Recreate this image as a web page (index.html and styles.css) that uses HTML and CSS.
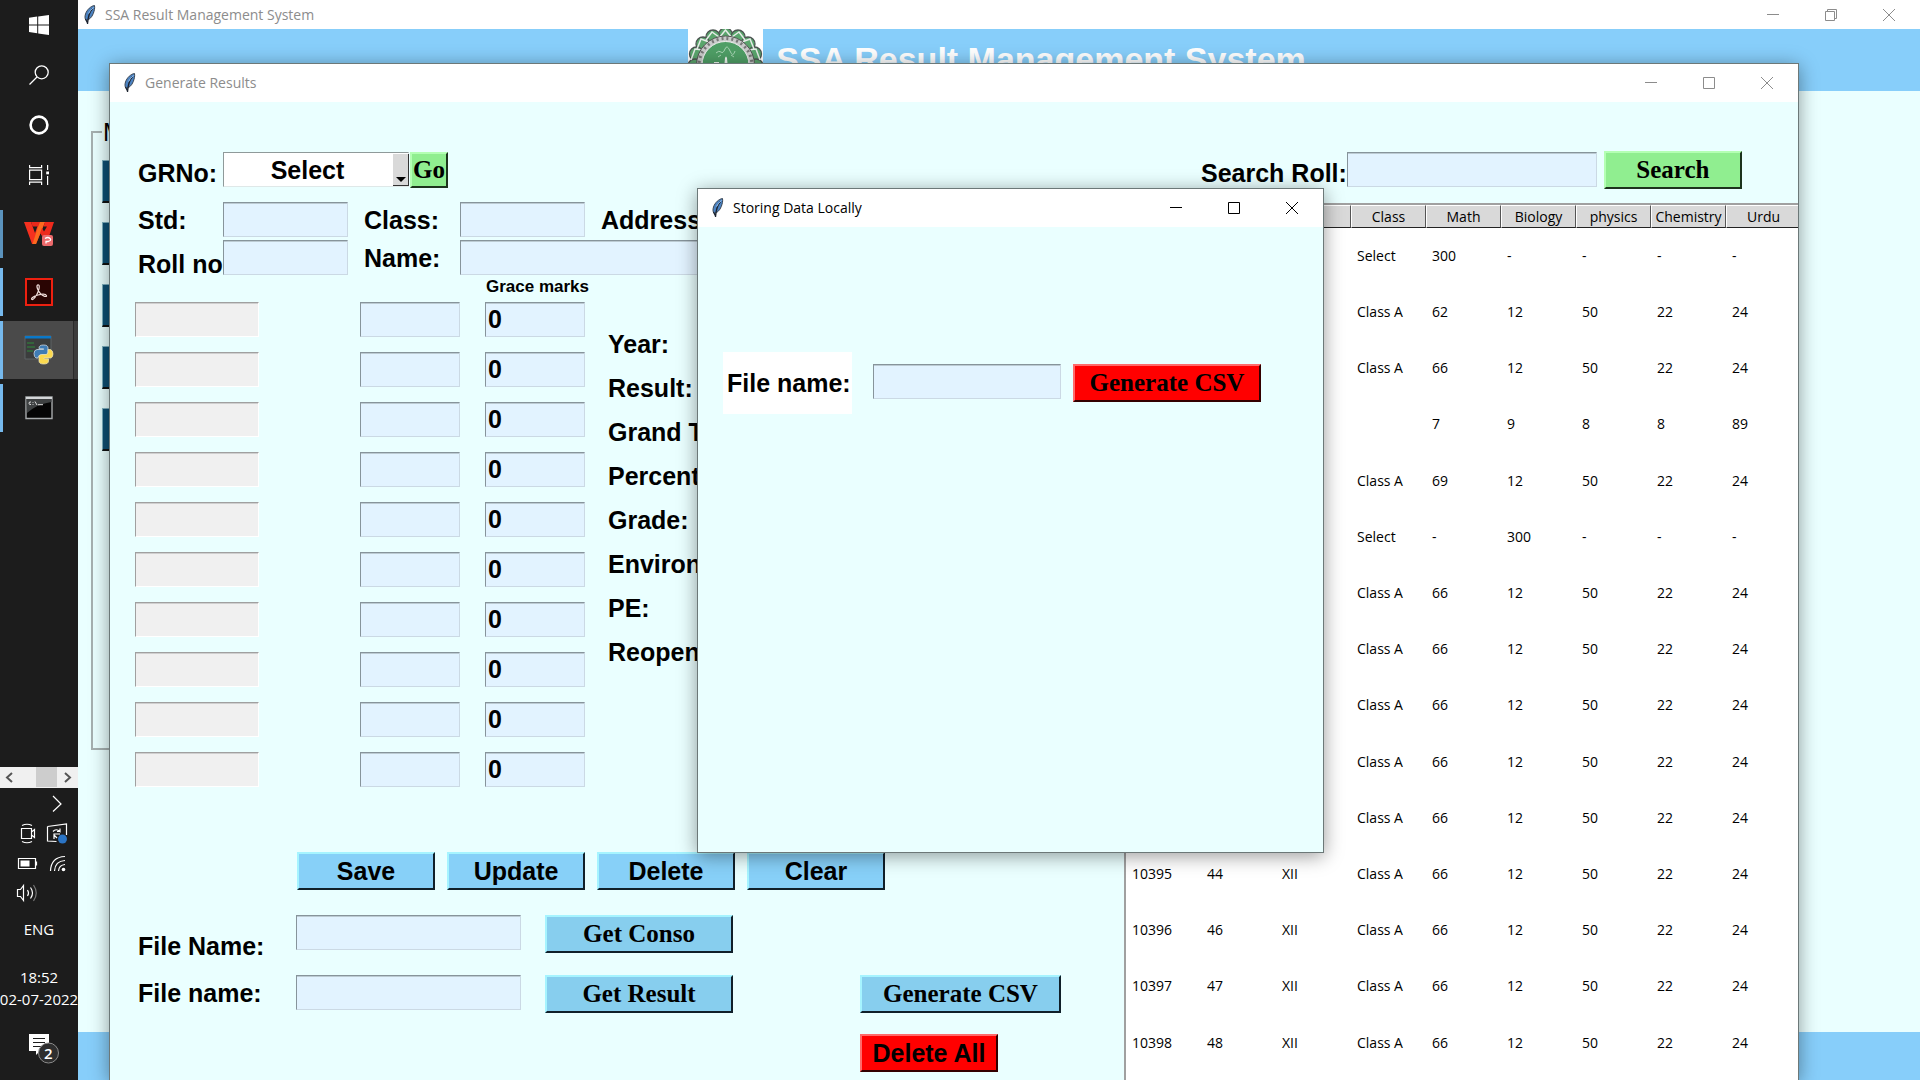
FILE: index.html
```html
<!DOCTYPE html>
<html lang="en">
<head>
<meta charset="utf-8">
<title>SSA Result Management System</title>
<link rel="stylesheet" href="styles.css">
</head>
<body>
<svg class="symbols" aria-hidden="true">
  <symbol id="feather" viewBox="0 0 12 20">
    <path d="M10.500 0.500C7 1 3 4.500 1.500 9c-.8 2.500-.8 5 .8 6.500 2.500-.5 5.500-3 7-7 1-2.800 1.700-5.500 1.200-8z" fill="#4b83c3" stroke="#3a4450" stroke-width="1"/>
    <path d="M8.500 3.500C5.500 7 4 11 3.500 19M1.500 14l2 4" fill="none" stroke="#1d2430" stroke-width="1.300"/>
    <path d="M9.500 2.500c-2 1.500-4 4-4.800 6" stroke="#9cc4ee" fill="none"/>
  </symbol>
  <symbol id="win-min" viewBox="0 0 12 12"><path d="M0 5.500h12" stroke="currentColor"/></symbol>
  <symbol id="win-max" viewBox="0 0 12 12"><path d="M.5.5h11v11H.5z" fill="none" stroke="currentColor"/></symbol>
  <symbol id="win-restore" viewBox="0 0 12 12"><path d="M.5 2.500h9v9h-9zM2.500 2.500v-2h9v9h-2" fill="none" stroke="currentColor"/></symbol>
  <symbol id="win-close" viewBox="0 0 12 12"><path d="M0 0l12 12M12 0L0 12" stroke="currentColor"/></symbol>
</svg>
<div class="screen">
  <nav class="taskbar" aria-label="Taskbar">
    <div class="system-items">
      <button aria-label="Start"><svg width="20" height="20" viewBox="0 0 20 20" fill="#fff"><path d="M0 2.800L8.200 1.600v7.800H0zM9.200 1.500L20 0v9.400H9.200zM0 10.400h8.200v7.800L0 17zM9.200 10.400H20V20L9.200 18.400z"/></svg></button>
      <button aria-label="Search"><svg width="20" height="20" viewBox="0 0 20 20" fill="none" stroke="#fff" stroke-width="1.300"><circle cx="12.700" cy="7.300" r="6.500"/><path d="M8 12L.5 19.500"/></svg></button>
      <button aria-label="Cortana"><svg width="20" height="20" viewBox="0 0 20 20" fill="none" stroke="#fff" stroke-width="2.600"><circle cx="10" cy="10" r="8.400"/></svg></button>
      <button aria-label="Task view"><svg width="20" height="20" viewBox="0 0 20 20" fill="none" stroke="#fff" stroke-width="1.200"><path d="M.6 5.200h12v9.400H.6zM.6 0v2.600h12V0M.6 20v-2.800h12V20M18.600 0v5M18.600 11v9"/><path d="M17.200 6.500H20v2.800h-2.800z" fill="#fff" stroke="none"/></svg></button>
    </div>
    <div class="apps">
      <button class="app dim" aria-label="WPS Office"><svg width="30" height="26" viewBox="0 0 30 26"><path d="M0 1h7l4 11 4-11h6l-9 22H8z" fill="#f5301f"/><path d="M15.500 1H21l-9 22H8.500z" fill="#fb6a1f"/><path d="M7 1h9l-2 4.500H8.600z" fill="#e9281b"/><path d="M21 1h9l-4.500 13-7.500 1-2-3 2-5 2 3.500 3-5h-3.500z" fill="#ee2a1c"/><rect x="18" y="14" width="11" height="11" rx="2" fill="#ec6a6c"/><path d="M21 17.500q3-2 5 0t-2 3h-2v2" fill="none" stroke="#fff" stroke-width="1.300"/></svg></button>
      <button class="app" aria-label="Acrobat Reader"><svg width="28" height="28" viewBox="0 0 28 28"><rect x="1" y="1" width="26" height="26" fill="#2a0503" stroke="#ee2010" stroke-width="2"/><path d="M12.500 7c2.500-1 2 3 .5 7-1.500 4-4.500 8-6 7.500s1-3.500 6-4.500c5-1.300 8-.8 8.500.7s-3.500 1-6-2c-2.500-2.700-4.500-7.500-3-8.700z" fill="none" stroke="#f1dfdc" stroke-width="1.200"/></svg></button>
      <button class="app active" aria-label="Python"><svg width="30" height="30" viewBox="0 0 30 30"><path d="M1 1h26v23H1z" fill="#3b3d3d" stroke="#5d6264"/><path d="M1 1h26v2.500H1z" fill="#0a78c8"/><path d="M3 8h7M3 12h8M3 16h6" stroke="#2f8c3a" stroke-width="1.200"/><path d="M15 13q0-3 4.500-3t4.500 3v5q0 2-2 2h-5q-3 0-3 3h-2q-2-1-2-4.500t3-4H19.500v-.8H15z" fill="#3f7cb4" stroke="#dfe8ef" stroke-width=".7"/><path d="M24 14.500h2.500q2.500 1 2.500 4.500t-2.500 4H20v.8h4.500V26q0 3-4.800 3t-4.700-3v-4q0-2.500 2.500-2.500H22q2-.3 2-2.500z" fill="#fbd94f" stroke="#eee6bd" stroke-width=".7"/></svg></button>
      <button class="app" aria-label="Command Prompt"><svg width="28" height="24" viewBox="0 0 28 24"><path d="M1 1h26v21.500H1z" fill="#050505" stroke="#a7aaac" stroke-width="1.400"/><path d="M1.500 3h25v3Q12 8 2 17z" fill="#3e4142"/><path d="M1 1h26v2H1z" fill="#d3d6d8"/><path d="M6 6q-2-.5-2 1.200T6 8.500M8 6v.8M8 8v.8M10 5.500l2 3.500M13 8.700h5" stroke="#ddd" fill="none"/></svg></button>
    </div>
    <div class="tray">
      <div class="tray-scroll"><svg width="78" height="20" viewBox="0 0 78 20"><path d="M36 0h21v20H36z" fill="#cdcdcd"/><path d="M12 6l-5 4.500 5 4.500M65 6l5 4.500-5 4.500" fill="none" stroke="#555" stroke-width="2"/></svg></div>
      <svg class="tray-icons" width="78" height="120" viewBox="0 0 78 120" fill="none" stroke="#fff" stroke-width="1.200">
        <path d="M53 8l8 8-8 7.500"/>
        <path d="M21.500 40.500h10v10h-10zM31.500 44l3-2.500v8l-3-2.500M22 37.500q5-2.500 10 0M22 53.500q5 2.500 10 0"/>
        <path d="M47.500 38.500L66.500 36v11M47.500 38.500v14.500l9 .5M53 43.500q3-3.500 7 0v-3M60 43.500h-3M60 46h-6v5M54 47l3 3"/>
        <circle cx="62.500" cy="51" r="4.500" fill="#2b74c4" stroke="none"/>
        <path d="M18.500 70.500h17v10h-17zM36.500 73.500v4"/><path d="M20.500 72.500h9v6h-9z" fill="#fff" stroke="none"/>
        <path d="M50.500 83Q51 69 65 68.500M54.500 83Q55 73 65 72.500M58.500 83Q59 77 65 76.500"/><circle cx="63.500" cy="81.500" r="1.800" fill="#fff" stroke="none"/>
        <path d="M17.500 101.500h3l3-4v15l-3-4h-3zM27.500 102q2 3 0 6M30.500 99.500q4 5.500 0 11"/><path d="M33.500 97q5.500 8 0 16" stroke="#777"/>
      </svg>
      <span class="lang">ENG</span>
      <time class="clock">18:52<br>02-07-2022</time>
      <button class="notices" aria-label="Notifications"><svg width="30" height="30" viewBox="0 0 30 30"><path d="M0 0h20v17H11l-4 4v-4H0z" fill="#fff"/><path d="M4 4.500h12M4 8.500h12M4 12.500h8" stroke="#1c1c1c" stroke-width="1.200"/><circle cx="19.500" cy="19" r="10" fill="#2e2e2e" stroke="#8b8b8b"/></svg><span class="badge">2</span></button>
    </div>
  </nav>

  <main class="main-window">
    <header class="titlebar outer">
      <svg class="feather" width="12" height="20"><use href="#feather"/></svg><span class="caption">SSA Result Management System</span>
      <button aria-label="Minimise"><svg width="12" height="12"><use href="#win-min"/></svg></button>
      <button aria-label="Restore"><svg width="12" height="12"><use href="#win-restore"/></svg></button>
      <button aria-label="Close"><svg width="12" height="12"><use href="#win-close"/></svg></button>
    </header>
    <div class="banner">
      <svg class="crest" width="75" height="62" viewBox="0 0 75 62">
        <path d="M0 0h75v62H0z" fill="#fff"/>
        <g fill="#5aa56c" stroke="#4d5552" stroke-width="1.300">
          <circle cx="37.500" cy="6" r="7"/><circle cx="25" cy="8" r="7"/><circle cx="50" cy="8" r="7"/><circle cx="15" cy="15" r="7"/><circle cx="60" cy="15" r="7"/><circle cx="8.500" cy="25" r="7"/><circle cx="66.500" cy="25" r="7"/><circle cx="7" cy="37" r="7"/><circle cx="68" cy="37" r="7"/><circle cx="10" cy="49" r="7"/><circle cx="65" cy="49" r="7"/>
        </g>
        <g fill="none" stroke="#e6ebe8" stroke-width="1.500"><path d="M31 9l6.500-8L44 9M18 11l6-8 7 5M44 8l7-5 6 8M9 20l4-10 8 3M54 13l8-3 4 10M3 31l4-11 8 1M60 21l8-1 4 11"/></g>
        <circle cx="37.500" cy="36" r="29" fill="#c9cbca" stroke="#555" stroke-width="1"/>
        <circle cx="37.500" cy="36" r="26.500" fill="none" stroke="#777" stroke-width="3" stroke-dasharray="2 3"/>
        <circle cx="37.500" cy="36" r="23.500" fill="#4f9f66" stroke="#eee" stroke-width="1"/>
        <path d="M28 24q3-3 5-1t4-3 5 2 5 0M30 28l3-2M43 26l3 2" stroke="#a9d5b5" fill="none" stroke-width="1"/>
        <path d="M35 50l2-21q1-3 2 0l2 21zM26 33h5v17h-5zM45 36l4-2v16h-4z" fill="#eef6ef"/>
      </svg>
      <h1>SSA Result Management System</h1>
    </div>
    <div class="main-body">
      <fieldset class="menu">
        <legend>Menu</legend>
        <button aria-label="Students"></button><button aria-label="Marks"></button><button aria-label="Results"></button><button aria-label="Reports"></button><button aria-label="Exit"></button>
      </fieldset>
    </div>
    <footer class="main-footer"></footer>

    <section class="window results" aria-label="Generate Results">
      <header class="titlebar">
        <svg class="feather" width="12" height="20"><use href="#feather"/></svg><span class="caption">Generate Results</span>
        <button aria-label="Minimise"><svg width="12" height="12"><use href="#win-min"/></svg></button>
        <button aria-label="Maximise"><svg width="12" height="12"><use href="#win-max"/></svg></button>
        <button aria-label="Close"><svg width="12" height="12"><use href="#win-close"/></svg></button>
      </header>
      <div class="results-body">
        <form class="form-pane">
          <div class="student">
            <label class="low" for="grno">GRNo:</label>
            <div class="picker">
              <div class="combo"><select id="grno"><option>Select</option></select><span class="combo-arrow"><svg width="10" height="5" viewBox="0 0 10 5"><path d="M0 0h10L5 5z"/></svg></span></div>
              <button type="button" class="btn green serif">Go</button>
            </div>
            <label class="col-1" for="std">Std:</label><input id="std">
            <label for="cls">Class:</label><input id="cls">
            <label>Address:</label>
            <label class="lower" for="roll">Roll no</label><input id="roll">
            <label for="name">Name:</label><input id="name" class="wide">
          </div>
          <div class="grace">Grace marks</div>
          <div class="marks">
            <div class="marks-grid">
              <input disabled aria-label="Subject 1"><input aria-label="Marks 1"><input aria-label="Grace 1" value="0">
              <input disabled aria-label="Subject 2"><input aria-label="Marks 2"><input aria-label="Grace 2" value="0">
              <input disabled aria-label="Subject 3"><input aria-label="Marks 3"><input aria-label="Grace 3" value="0">
              <input disabled aria-label="Subject 4"><input aria-label="Marks 4"><input aria-label="Grace 4" value="0">
              <input disabled aria-label="Subject 5"><input aria-label="Marks 5"><input aria-label="Grace 5" value="0">
              <input disabled aria-label="Subject 6"><input aria-label="Marks 6"><input aria-label="Grace 6" value="0">
              <input disabled aria-label="Subject 7"><input aria-label="Marks 7"><input aria-label="Grace 7" value="0">
              <input disabled aria-label="Subject 8"><input aria-label="Marks 8"><input aria-label="Grace 8" value="0">
              <input disabled aria-label="Subject 9"><input aria-label="Marks 9"><input aria-label="Grace 9" value="0">
              <input disabled aria-label="Subject 10"><input aria-label="Marks 10"><input aria-label="Grace 10" value="0">
            </div>
            <ul class="summary"><li>Year:</li><li>Result:</li><li>Grand Total:</li><li>Percentage:</li><li>Grade:</li><li>Environment:</li><li>PE:</li><li>Reopen:</li></ul>
          </div>
          <div class="actions">
            <button type="button" class="btn sky">Save</button><button type="button" class="btn sky">Update</button><button type="button" class="btn sky">Delete</button><button type="button" class="btn sky">Clear</button>
          </div>
          <div class="files">
            <label class="lowest" for="conso">File Name:</label><input id="conso">
            <button type="button" class="btn blue serif">Get Conso</button>
            <label class="col-1" for="resfile">File name:</label><input id="resfile">
            <button type="button" class="btn blue serif">Get Result</button>
            <button type="button" class="btn blue serif csv">Generate CSV</button>
            <button type="button" class="btn red delete-all">Delete All</button>
          </div>
        </form>
        <div class="list-pane">
          <form class="search">
            <label for="search">Search Roll:</label><input id="search">
            <button type="button" class="btn green serif">Search</button>
          </form>
          <div class="table-frame">
            <table>
              <thead><tr><th>GRNo</th><th>Roll</th><th>Std</th><th>Class</th><th>Math</th><th>Biology</th><th>physics</th><th>Chemistry</th><th>Urdu</th></tr></thead>
              <tbody>
                <tr><td></td><td></td><td></td><td>Select</td><td>300</td><td>-</td><td>-</td><td>-</td><td>-</td></tr>
                <tr><td></td><td></td><td></td><td>Class A</td><td>62</td><td>12</td><td>50</td><td>22</td><td>24</td></tr>
                <tr><td></td><td></td><td></td><td>Class A</td><td>66</td><td>12</td><td>50</td><td>22</td><td>24</td></tr>
                <tr><td></td><td></td><td></td><td></td><td>7</td><td>9</td><td>8</td><td>8</td><td>89</td></tr>
                <tr><td></td><td></td><td></td><td>Class A</td><td>69</td><td>12</td><td>50</td><td>22</td><td>24</td></tr>
                <tr><td></td><td></td><td></td><td>Select</td><td>-</td><td>300</td><td>-</td><td>-</td><td>-</td></tr>
                <tr><td></td><td></td><td></td><td>Class A</td><td>66</td><td>12</td><td>50</td><td>22</td><td>24</td></tr>
                <tr><td></td><td></td><td></td><td>Class A</td><td>66</td><td>12</td><td>50</td><td>22</td><td>24</td></tr>
                <tr><td></td><td></td><td></td><td>Class A</td><td>66</td><td>12</td><td>50</td><td>22</td><td>24</td></tr>
                <tr><td></td><td></td><td></td><td>Class A</td><td>66</td><td>12</td><td>50</td><td>22</td><td>24</td></tr>
                <tr><td></td><td></td><td></td><td>Class A</td><td>66</td><td>12</td><td>50</td><td>22</td><td>24</td></tr>
                <tr><td>10395</td><td>44</td><td>XII</td><td>Class A</td><td>66</td><td>12</td><td>50</td><td>22</td><td>24</td></tr>
                <tr><td>10396</td><td>46</td><td>XII</td><td>Class A</td><td>66</td><td>12</td><td>50</td><td>22</td><td>24</td></tr>
                <tr><td>10397</td><td>47</td><td>XII</td><td>Class A</td><td>66</td><td>12</td><td>50</td><td>22</td><td>24</td></tr>
                <tr><td>10398</td><td>48</td><td>XII</td><td>Class A</td><td>66</td><td>12</td><td>50</td><td>22</td><td>24</td></tr>
              </tbody>
            </table>
          </div>
        </div>
      </div>
    </section>

    <section class="window dialog" role="dialog" aria-label="Storing Data Locally">
      <header class="titlebar">
        <svg class="feather" width="12" height="20"><use href="#feather"/></svg><span class="caption">Storing Data Locally</span>
        <button aria-label="Minimise"><svg width="12" height="12"><use href="#win-min"/></svg></button>
        <button aria-label="Maximise"><svg width="12" height="12"><use href="#win-max"/></svg></button>
        <button aria-label="Close"><svg width="12" height="12"><use href="#win-close"/></svg></button>
      </header>
      <form class="dialog-form">
        <label for="csvname">File name:</label><input id="csvname">
        <button type="button" class="btn red serif">Generate CSV</button>
      </form>
    </section>
  </main>
</div>
</body>
</html>
```
FILE: styles.css
```css
* { box-sizing: border-box; }
body { margin: 0; font: 700 25px/28px "Liberation Sans", Arial, sans-serif; color: #000; }
button, input, select { font: inherit; color: inherit; margin: 0; padding: 0; border: 0; border-radius: 0; background: none; }
label { white-space: nowrap; }
.symbols { position: absolute; width: 0; height: 0; }
.screen { display: flex; height: 100vh; overflow: hidden; }

/* taskbar */
.taskbar { flex: none; width: 78px; display: flex; flex-direction: column; background: #1c1c1c; color: #fff; font: 400 15px/22px "Open Sans", "Noto Sans", sans-serif; }
.taskbar button { display: grid; place-items: center; width: 100%; height: 50px; }
.apps { flex: 1; padding-top: 5px; }
.taskbar .app { position: relative; height: 58px; }
.app::before { content: ""; position: absolute; left: 0; top: 5px; bottom: 5px; width: 3px; background: #76b9ed; }
.app.dim::before { background: #5b93bd; }
.app.active { background: linear-gradient(to right, #4a4a4a 73px, #2a2a2a 73px, #2a2a2a 74px, #3c3c3c 74px); }
.app.active::before { top: 0; bottom: 0; }
.tray { flex: none; display: flex; flex-direction: column; align-items: center; height: 313px; }
.tray > * { flex: none; }
.tray-scroll { height: 21px; width: 100%; background: #f0f0f0; }
.tray-scroll svg, .tray-icons { display: block; }
.lang { margin-top: 10px; }
.clock { margin-top: 26px; text-align: center; white-space: nowrap; }
.taskbar .notices { position: relative; margin-top: 7px; height: 64px; padding-left: 10px; border-bottom: 1px solid #6a6a6a; }
.badge { position: absolute; left: 44px; top: 26px; font-weight: 600; line-height: 20px; }

/* main window */
.main-window { position: relative; flex: 1; display: flex; flex-direction: column; background: #eaffff; }
.titlebar { display: flex; align-items: center; height: 38px; padding: 0 2px 0 14px; background: #fff; color: #000; font: 400 14px/20px "Open Sans", "Noto Sans", sans-serif; }
.titlebar button { display: grid; place-items: center; width: 58px; height: 100%; }
.titlebar svg { display: block; }
.caption { flex: 1; padding-left: 9px; }
.outer { height: 29px; padding-left: 6px; }
.outer, .results .titlebar { color: #8c8c8c; }
.banner { display: flex; justify-content: center; align-items: center; gap: 13px; height: 62px; padding-right: 4px; background: #87cefa; }
.banner h1 { margin: 0; padding-bottom: 3px; font-size: 34px; line-height: 40px; color: #fff; }
.main-body { flex: 1; padding: 27px 13px; }
.main-footer { height: 48px; background: #87cefa; }
.menu { display: flex; flex-direction: column; gap: 19px; width: 300px; height: 632px; margin: 0; padding: 14px 9px; border: 2px solid #a5b0b0; }
.menu legend { padding: 0 1px; font-weight: 400; line-height: 28px; }
.menu button { height: 43px; background: #0e4f73; border: solid; border-width: 1px 2px 2px 1px; border-color: #7fb0bf #111 #111 #7fb0bf; }

/* floating windows */
.window { position: absolute; background: #eaffff; border: 1px solid #6c7878; box-shadow: 0 3px 18px rgba(0, 0, 0, .4); overflow: hidden; }
.results { left: 31px; right: 121px; top: 63px; bottom: 0; border-bottom: 0; }
.dialog { left: 619px; top: 188px; width: 627px; height: 665px; }

/* controls */
input { height: 35px; width: 125px; padding: 0 2px; background: #e2f3ff; border: 1px solid; border-color: #87949b #cbd9e4 #cbd9e4 #87949b; box-shadow: inset 0 1px #bccbd3; }
input:disabled { background: #f0f0f0; border-color: #a0a0a0 #fff #fff #a0a0a0; box-shadow: inset 0 1px #cfcfcf; }
.btn { height: 38px; border: solid; border-width: 2px; text-align: center; white-space: nowrap; line-height: 28px; }
.serif { font-family: "Liberation Serif", "Times New Roman", serif; }
.green { background: #90ee90; border-color: #b4ffb4 #1d331d #1d331d #b4ffb4; }
.sky { background: #87d0f8; border-color: #a6f4ff #10202a #10202a #a6f4ff; }
.blue { background: #87ceee; border-color: #a6f4ff #10202a #10202a #a6f4ff; }
.red { background: #f00; border-color: #ff6a6a #300 #300 #ff6a6a; }

/* results window */
.results-body { display: grid; grid-template-columns: 1014px 1fr; }
.form-pane { padding: 50px 0 0 25px; }
.student { display: grid; grid-template-columns: 85px 141px 96px 141px auto; grid-template-rows: 50px 38px 35px; padding-left: 3px; }
.student label { padding-top: 4px; }
.student .low { padding-top: 7px; }
.student .lower { grid-column: 1; padding-top: 10px; }
.student .col-1 { grid-column: 1; }
.student .wide { grid-column: span 2; width: 400px; }
.picker { grid-column: 2 / 5; display: flex; gap: 1px; }
.picker .btn { width: 38px; height: 36px; }
.combo { position: relative; width: 186px; height: 35px; }
.combo select { appearance: none; width: 100%; height: 100%; padding-right: 17px; text-align: center; text-align-last: center; background: #fff; border: 1px solid; border-color: #8f9a9a #dfe8e8 #dfe8e8 #8f9a9a; }
.combo-arrow { position: absolute; top: 2px; right: 0; bottom: 1px; width: 16px; display: flex; align-items: flex-end; justify-content: center; padding-bottom: 3px; background: #d9d9d9; border-right: 1px solid #333; border-bottom: 1px solid #333; pointer-events: none; }
.combo-arrow svg { display: block; }
.grace { padding: 2px 0 5px 351px; font-size: 17px; line-height: 20px; }
.marks { display: flex; height: 550px; }
.marks-grid { display: grid; grid-template-columns: 225px 125px 123px; grid-auto-rows: 50px; }
.marks-grid input { width: 100px; }
.marks-grid input:disabled { width: 124px; }
.summary { margin: 0; padding: 20px 0 0; list-style: none; line-height: 44px; white-space: nowrap; }
.actions { display: flex; gap: 12px; padding-left: 162px; }
.actions .btn { width: 138px; }
.files { display: grid; grid-template-columns: 158px 249px 315px 201px; grid-template-rows: 60px 59px 38px; padding: 25px 0 0 3px; }
.files input { width: 225px; }
.files .btn { width: 188px; }
.files label { padding-top: 4px; }
.files .lowest { padding-top: 17px; }
.files .col-1 { grid-column: 1; }
.files .csv { width: 201px; }
.files .delete-all { grid-column: 4; width: 138px; }
.search { display: flex; height: 101px; padding: 49px 0 0 77px; }
.search label { padding-top: 8px; }
.search input { width: 250px; margin: 1px 7px 0 0; }
.search .btn { width: 138px; }
.table-frame { height: 900px; overflow: hidden; background: #fff; border-left: 2px solid #a0a0a0; border-top: 2px solid #a0a0a0; }
table { width: 675px; table-layout: fixed; border-collapse: separate; border-spacing: 0; font: 400 14px/20px "Open Sans", "Noto Sans", sans-serif; }
th { height: 23px; padding: 0; font-weight: 400; background: #d9d9d9; border: 1px solid; border-color: #fff #555 #222 #fff; white-space: nowrap; }
td { height: 56px; padding: 0 0 0 6px; }
tbody tr:nth-child(5n) td { height: 57px; }

/* dialog */
.dialog-form { display: flex; align-items: flex-start; padding: 125px 0 0 25px; }
.dialog-form label { width: 129px; height: 62px; padding: 17px 4px; background: #fff; }
.dialog-form input { width: 188px; margin: 12px 12px 0 21px; }
.dialog-form .btn { width: 188px; margin-top: 12px; }
```
